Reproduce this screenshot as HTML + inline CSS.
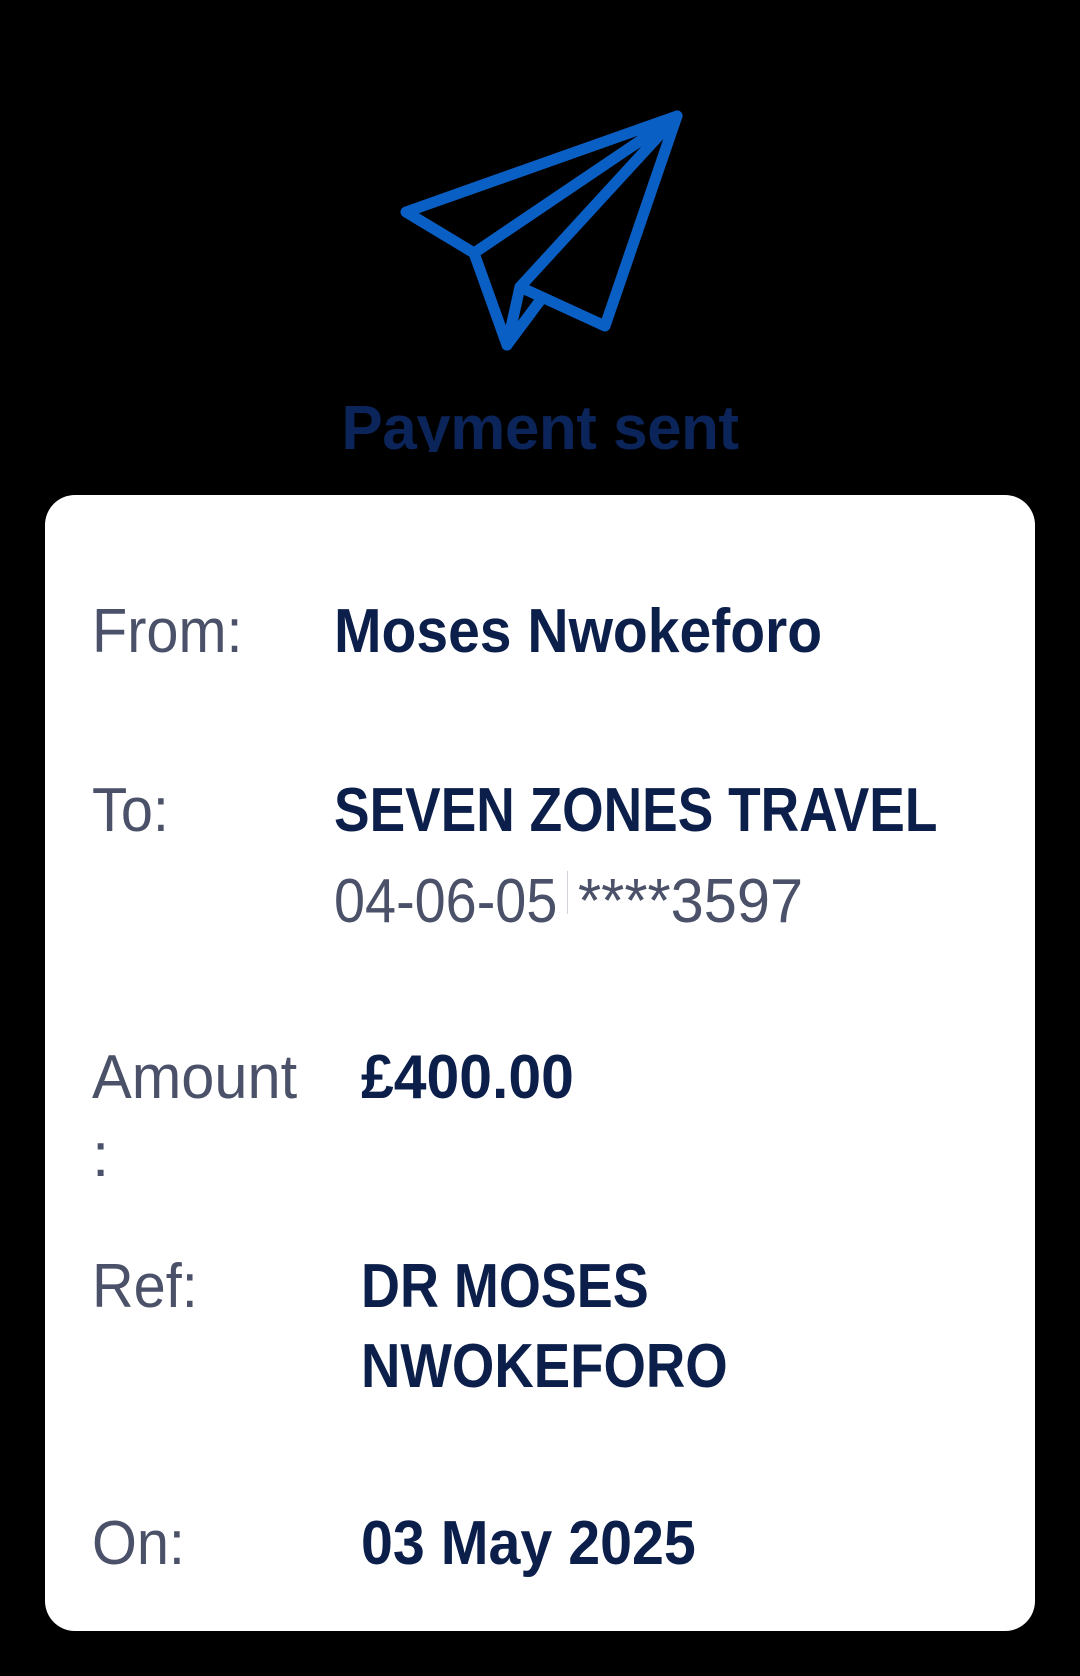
<!DOCTYPE html>
<html><head><meta charset="utf-8"><style>
html,body{margin:0;padding:0;background:#000;}
body{width:1080px;height:1676px;position:relative;overflow:hidden;font-family:"Liberation Sans",sans-serif;}
.t{position:absolute;font-size:62px;line-height:62px;white-space:nowrap;transform-origin:0 0;}
.l{color:#4a5168;font-weight:400;}
.v{color:#0b1f4a;font-weight:700;}
.card{position:absolute;left:45px;top:495px;width:990px;height:1136px;background:#fff;border-radius:30px;}
.clip{position:absolute;left:0;top:380px;width:1080px;height:72px;overflow:hidden;}
</style></head><body>
<svg style="position:absolute;left:0;top:0" width="1080" height="380" viewBox="0 0 1080 380">
<g fill="none" stroke="#0a5fc4" stroke-width="11" stroke-linejoin="round" stroke-linecap="round">
<path d="M677 116 L406 212 L474 253 L507 345 L542 298"/>
<path d="M474 253 L677 116"/>
<path d="M677 116 L520 287 L605 326 Z"/>
<path d="M520 287 L507 345"/>
</g></svg>
<div class="clip"><div class="t" style="top:18px;left:0;width:1080px;text-align:center;color:#0b2459;font-weight:700;letter-spacing:-0.5px;">Payment sent</div></div>
<div class="card"></div>

<div class="t l" style="left:92px;top:601px;transform:scaleX(.93)">From:</div>
<div class="t v" style="left:334px;top:601px;transform:scaleX(.92)">Moses Nwokeforo</div>

<div class="t l" style="left:92px;top:780px;transform:scaleX(.93)">To:</div>
<div class="t v" style="left:334px;top:780px;transform:scaleX(.86)">SEVEN ZONES TRAVEL</div>
<div class="t l" style="left:334px;top:871px;transform:scaleX(.9)">04-06-05</div>
<div style="position:absolute;left:567px;top:871px;width:1px;height:43px;background:#d0d3da"></div>
<div class="t l" style="left:578px;top:871px;transform:scaleX(.96)">****3597</div>

<div class="t l" style="left:92px;top:1047px;transform:scaleX(.96)">Amount</div>
<div class="t l" style="left:92px;top:1125px;">:</div>
<div class="t v" style="left:361px;top:1047px;transform:scaleX(.95)">£400.00</div>

<div class="t l" style="left:92px;top:1256px;transform:scaleX(.93)">Ref:</div>
<div class="t v" style="left:361px;top:1256px;transform:scaleX(.87)">DR MOSES</div>
<div class="t v" style="left:361px;top:1336px;transform:scaleX(.88)">NWOKEFORO</div>

<div class="t l" style="left:92px;top:1513px;transform:scaleX(.93)">On:</div>
<div class="t v" style="left:361px;top:1513px;transform:scaleX(.925)">03 May 2025</div>
</body></html>
